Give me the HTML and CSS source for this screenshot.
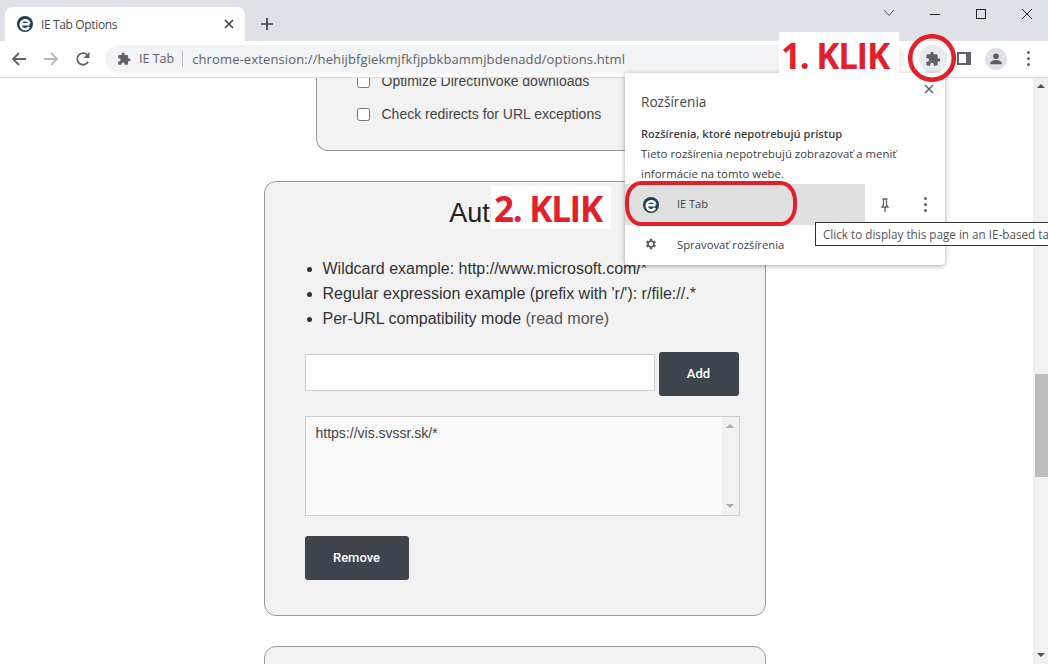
FILE: index.html
```html
<!DOCTYPE html>
<html lang="sk">
<head>
<meta charset="utf-8">
<title>IE Tab Options</title>
<link rel="stylesheet" href="styles.css">
</head>
<body>
<div class="window">
  <header class="tabstrip">
    <div class="tab">
      <svg class="ico16" viewBox="0 0 16 16"><circle cx="8" cy="8" r="8" fill="#1f3f52"/><path d="M3.500 8.200h9M12 11A4.500 4.500 0 1 1 12.500 7.500" fill="none" stroke="#fff" stroke-width="2.500"/></svg>
      <span class="tab-title">IE Tab Options</span>
      <svg class="tab-close" viewBox="0 0 10 10"><path d="M1 1l8 8M9 1l-8 8" stroke="#3c4043" stroke-width="1.6" fill="none"/></svg>
    </div>
    <svg class="new-tab" viewBox="0 0 12 12"><path d="M6 0v12M0 6h12" stroke="#3c4043" stroke-width="1.7" fill="none"/></svg>
    <div class="window-controls">
      <svg class="wc wc-chev" viewBox="0 0 12 8"><path d="M1 1l5 5.5L11 1" stroke="#4a4c50" fill="none"/></svg>
      <svg class="wc wc-min" viewBox="0 0 12 12"><path d="M1 6.5h10" stroke="#222" fill="none"/></svg>
      <svg class="wc wc-max" viewBox="0 0 12 12"><rect x="1.5" y="1.5" width="9" height="9" stroke="#222" fill="none"/></svg>
      <svg class="wc wc-close" viewBox="0 0 12 12"><path d="M1 1l10 10M11 1L1 11" stroke="#222" fill="none"/></svg>
    </div>
  </header>

  <nav class="toolbar">
    <svg class="nav-ico" viewBox="0 0 16 16"><path d="M15 8H2M8 2L2 8l6 6" stroke="#5f6368" stroke-width="1.8" fill="none"/></svg>
    <svg class="nav-ico" viewBox="0 0 16 16"><path d="M1 8h13M8 2l6 6-6 6" stroke="#b5b7ba" stroke-width="1.8" fill="none"/></svg>
    <svg class="nav-ico" viewBox="0 0 16 16"><path d="M13.2 10.6A5.8 5.8 0 1 1 12.2 3.9" stroke="#5f6368" stroke-width="1.8" fill="none"/><path d="M14.5 1v6h-6z" fill="#5f6368"/></svg>
    <div class="omnibox">
      <svg class="ico14" viewBox="0 0 24 24"><path d="M20.5 11H19V7a2 2 0 0 0-2-2h-4V3.500a2.500 2.500 0 0 0-5 0V5H4a2 2 0 0 0-2 2v3.800h1.500a2.700 2.700 0 0 1 0 5.400H2V20a2 2 0 0 0 2 2h3.800v-1.500a2.700 2.700 0 0 1 5.400 0V22H17a2 2 0 0 0 2-2v-4h1.500a2.500 2.500 0 0 0 0-5z" fill="#5f6368"/></svg>
      <span class="omni-ext">IE Tab</span>
      <span class="omni-url">chrome-extension://hehijbfgiekmjfkfjpbkbammjbdenadd/options.html</span>
    </div>
    <div class="tool-actions">
      <span class="ext-btn"><svg class="ico16" viewBox="0 0 24 24"><path d="M20.500 11H19V7a2 2 0 0 0-2-2h-4V3.500a2.500 2.500 0 0 0-5 0V5H4a2 2 0 0 0-2 2v3.800h1.500a2.700 2.700 0 0 1 0 5.400H2V20a2 2 0 0 0 2 2h3.800v-1.500a2.700 2.700 0 0 1 5.400 0V22H17a2 2 0 0 0 2-2v-4h1.500a2.500 2.500 0 0 0 0-5z" fill="#5f6368"/></svg></span>
      <span class="side-btn"></span>
      <span class="avatar"><svg viewBox="0 0 16 16" class="ico14"><circle cx="8" cy="4.800" r="3.200" fill="#5a5f66"/><path d="M1.500 14v-1.500c0-2.300 4.300-3.400 6.500-3.400s6.500 1.100 6.500 3.400V14z" fill="#5a5f66"/></svg></span>
      <span class="kebab"><i></i><i></i><i></i></span>
    </div>
  </nav>

  <div class="viewport">
    <main class="page">
      <section class="card card-top">
        <label class="check"><span class="box"></span>Optimize DirectInvoke downloads</label>
        <label class="check"><span class="box"></span>Check redirects for URL exceptions</label>
      </section>
      <section class="card card-main">
        <h2 class="card-title">Auto URLs</h2>
        <ul class="hints">
          <li>Wildcard example: http://www.microsoft.com/*</li>
          <li>Regular expression example (prefix with 'r/'): r/file://.*</li>
          <li>Per-URL compatibility mode <a class="more">(read more)</a></li>
        </ul>
        <div class="add-row">
          <div class="url-input"></div>
          <button class="btn btn-add">Add</button>
        </div>
        <div class="url-list">
          <div class="url-item">https://vis.svssr.sk/*</div>
          <div class="list-scroll"><span class="arr arr-up"></span><span class="arr arr-down"></span></div>
        </div>
        <button class="btn btn-remove">Remove</button>
      </section>
      <section class="card card-next"></section>
    </main>
    <aside class="scrollbar">
      <span class="arr arr-up dark"></span>
      <span class="thumb"></span>
      <span class="arr arr-down dark"></span>
    </aside>
  </div>

  <div class="popup">
    <svg class="popup-close" viewBox="0 0 10 10"><path d="M1 1l8 8M9 1l-8 8" stroke="#5f6368" stroke-width="1.500" fill="none"/></svg>
    <div class="popup-title">Rozšírenia</div>
    <div class="popup-body">
      <strong>Rozšírenia, ktoré nepotrebujú prístup</strong>
      <p>Tieto rozšírenia nepotrebujú zobrazovať a meniť informácie na tomto webe.</p>
    </div>
    <div class="ext-row">
      <div class="ext-main">
        <svg class="ico16" viewBox="0 0 16 16"><circle cx="8" cy="8" r="8" fill="#1f3f52"/><path d="M3.500 8.200h9M12 11A4.500 4.500 0 1 1 12.500 7.500" fill="none" stroke="#fff" stroke-width="2.500"/></svg>
        <span class="ext-name">IE Tab</span>
      </div>
      <svg class="pin" viewBox="0 0 12 14"><path d="M3.500 1h5M4.500 1v6L3 9h6L7.500 7V1M6 9v5" stroke="#5f6368" stroke-width="1.300" fill="none"/></svg>
      <span class="kebab small"><i></i><i></i><i></i></span>
    </div>
    <div class="manage-row">
      <svg class="ico14" viewBox="0 0 24 24"><path fill="#5f6368" fill-rule="evenodd" d="M19.400 13a7.500 7.500 0 0 0 0-2l2.100-1.600-2-3.500-2.500 1a7.500 7.500 0 0 0-1.700-1L15 3.200h-4l-.4 2.700a7.500 7.500 0 0 0-1.700 1l-2.500-1-2 3.500L6.500 11a7.500 7.500 0 0 0 0 2l-2.100 1.600 2 3.500 2.500-1a7.500 7.500 0 0 0 1.700 1l.4 2.700h4l.4-2.700a7.500 7.500 0 0 0 1.700-1l2.500 1 2-3.500zM13 15.500a3.500 3.500 0 1 1 0-7 3.500 3.500 0 0 1 0 7z" transform="translate(-1 0)"/></svg>
      <span>Spravovať rozšírenia</span>
    </div>
  </div>

  <div class="tooltip">Click to display this page in an IE-based tab</div>

  <div class="note note-1">1. KLIK</div>
  <div class="note note-2">2. KLIK</div>
  <svg class="ring ring-1" viewBox="0 0 48 48"><circle cx="24" cy="24" r="21.800" fill="none" stroke="#e2202c" stroke-width="4.500"/></svg>
  <div class="ring-row"></div>
</div>
</body>
</html>
```
FILE: styles.css
```css
* { box-sizing: border-box; }
html, body { margin: 0; height: 100%; overflow: hidden; background: #fff; }
body { font-family: "Liberation Sans", Arial, sans-serif; color: #333; }

.window { position: relative; width: 1048px; height: 664px; overflow: hidden; display: flex; flex-direction: column; }

.tabstrip { height: 41px; flex: none; background: #dee1e6; display: flex; align-items: flex-end; padding-left: 5px; }
.tab { width: 240px; height: 34px; background: #fff; border-radius: 8px 8px 0 0; display: flex; align-items: center; padding: 0 11px 0 12px; }
.ico16 { width: 16px; height: 16px; flex: none; display: block; }
.ico14 { width: 14px; height: 14px; flex: none; display: block; }
.tab-title { flex: 1; margin-left: 8px; font: 12px "Open Sans", sans-serif; color: #45494e; letter-spacing: -.36px; }
.tab-close { width: 10px; height: 10px; margin-right: 0; }
.new-tab { width: 12px; height: 12px; margin: 0 0 11px 16px; }
.window-controls { margin-left: auto; height: 100%; position: relative; display: flex; align-items: flex-start; padding-top: 8px; }
.wc { display: block; width: 12px; height: 12px; margin-left: 34px; }
.wc-chev { height: 8px; margin-top: 1px; margin-left: 0; }
.wc-close { margin-right: 15px; }

.toolbar { height: 37px; flex: none; background: #fff; border-bottom: 1px solid #d9dbde; display: flex; align-items: center; padding: 0 0 1px 11px; }
.nav-ico { width: 16px; height: 16px; margin-right: 16px; flex: none; }
.omnibox { width: 800px; height: 28px; margin-left: -2px; background: #f1f3f4; border-radius: 14px; display: flex; align-items: center; padding-left: 12px; font: 13px "Open Sans", sans-serif; color: #5f6368; white-space: nowrap; }
.omni-ext { margin-left: 8px; padding-right: 8px; border-right: 1px solid #b8babd; line-height: 16px; font-size: 12.5px; }
.omni-url { margin-left: 9px; font-size: 13px; letter-spacing: .12px; }
.tool-actions { margin-left: 14px; display: flex; align-items: center; }
.ext-btn { width: 28px; height: 28px; border-radius: 50%; background: #e8eaed; display: flex; align-items: center; justify-content: center; }
.side-btn { width: 14px; height: 13px; margin-left: 10px; border: 2px solid #5f6368; border-right-width: 5px; background: #fff; }
.avatar { width: 22px; height: 22px; margin-left: 14px; border-radius: 50%; background: #dee1e6; display: flex; align-items: center; justify-content: center; }
.kebab { display: flex; flex-direction: column; gap: 3px; margin-left: 20px; width: 4px; }
.kebab i { width: 3px; height: 3px; border-radius: 50%; background: #5f6368; display: block; }

.viewport { flex: 1; min-height: 0; display: flex; }
.page { flex: 1; min-width: 0; overflow: hidden; display: flex; flex-direction: column; align-items: center; padding-right: 4px; }
.card { background: #f2f2f2; border: 1px solid #999; border-radius: 12px; flex: none; }
.card-top { width: 398px; height: 123px; margin-top: -50px; padding: 44px 0 0 40px; border-top: 0; }
.check { display: flex; align-items: center; height: 18px; margin-bottom: 15px; font-size: 14px; color: #444; }
.box { width: 13px; height: 13px; margin-right: 12px; border: 1px solid #767676; border-radius: 2.500px; background: #fff; flex: none; }
.card-main { width: 502px; height: 435px; margin-top: 30px; padding: 0 26px 0 40px; }
.card-title { margin: 13px 0 0; font-weight: 400; font-size: 27px; line-height: 36px; text-align: center; color: #222; transform: translateX(-7px); }
.hints { margin: 25px 0 0; padding: 0 0 0 18px; font-size: 16px; line-height: 25px; color: #333; }
.more { color: #555; }
.add-row { display: flex; margin-top: 21px; align-items: flex-start; gap: 4px; }
.url-input { width: 350px; height: 37px; margin-top: 2px; background: #fff; border: 1px solid #ccc; }
.btn { border: 0; background: #3d444b; color: #fff; border-radius: 3px; font: 500 13px Roboto, sans-serif; padding: 0 0 2px; }
.btn-add { width: 80px; height: 44px; }
.url-list { width: 435px; height: 100px; margin-top: 20px; background: #fafafa; border: 1px solid #ccc; display: flex; }
.url-item { flex: 1; padding: 8px 10px; font-size: 14px; color: #444; }
.list-scroll { width: 17px; background: #f1f1f1; display: flex; flex-direction: column; justify-content: space-between; align-items: center; padding: 7px 0; }
.arr { display: block; width: 0; height: 0; border-left: 4px solid transparent; border-right: 4px solid transparent; }
.arr-up { border-bottom: 4px solid #aaa; }
.arr-down { border-top: 4px solid #aaa; }
.btn-remove { display: block; width: 104px; height: 44px; margin-top: 20px; }
.card-next { width: 502px; height: 100px; margin-top: 30px; }

.scrollbar { width: 15px; flex: none; background: #f1f1f1; position: relative; display: flex; flex-direction: column; align-items: center; justify-content: space-between; padding: 6px 0 7px 1px; }
.arr.dark.arr-up { border-bottom-color: #505050; }
.arr.dark.arr-down { border-top-color: #505050; }
.thumb { position: absolute; left: 2px; right: 0; top: 296px; height: 103px; background: #bdbdbd; }

.popup { position: absolute; left: 625px; top: 73px; width: 320px; height: 192px; background: #fff; border-radius: 0 0 4px 4px; box-shadow: 0 1px 5px rgba(0,0,0,.35); font-family: "Open Sans", sans-serif; color: #3c4043; }
.popup-close { position: absolute; left: 299px; top: 11px; width: 10px; height: 10px; }
.popup-title { padding: 19px 0 0 16px; font-size: 13.600px; line-height: 20px; color: #45494e; }
.popup-body { padding: 12px 16px 0; font-size: 11.400px; line-height: 20px; height: 72px; }
.popup-body strong { display: block; font-weight: 600; font-size: 11.100px; }
.popup-body p { margin: 0; width: 280px; }
.ext-row { display: flex; align-items: center; height: 41px; }
.ext-main { width: 240px; height: 41px; background: #e0e0e0; display: flex; align-items: center; padding-left: 18px; gap: 18px; font-size: 11px; }
.ext-name { transform: translateY(-1px); }
.pin { width: 12px; height: 14px; margin-left: 14px; }
.kebab.small { margin-left: 33px; }
.manage-row { display: flex; align-items: center; height: 38px; padding-left: 19px; gap: 19px; font-size: 11.300px; }

.tooltip { position: absolute; left: 815px; top: 222px; width: 260px; height: 24px; background: #fff; border: 1px solid #333; padding-left: 7px; font: 11.700px/22px "Open Sans", sans-serif; color: #555; white-space: nowrap; overflow: hidden; }

.note { position: absolute; background: #fff; color: #e2202c; font: 700 35px/1 "Open Sans", sans-serif; letter-spacing: -1.300px; display: flex; align-items: center; white-space: nowrap; }
.note-1 { left: 779px; top: 32px; width: 120px; height: 44px; padding: 3px 0 0 2px; }
.note-2 { left: 491px; top: 186px; width: 120px; height: 43px; padding: 1px 0 0 3px; }
.ring { position: absolute; }
.ring-1 { left: 908px; top: 34px; width: 48px; height: 48px; }
.ring-row { position: absolute; left: 625px; top: 181px; width: 172px; height: 45px; border: 4.500px solid #e2202c; border-radius: 16px / 20px; }
```
